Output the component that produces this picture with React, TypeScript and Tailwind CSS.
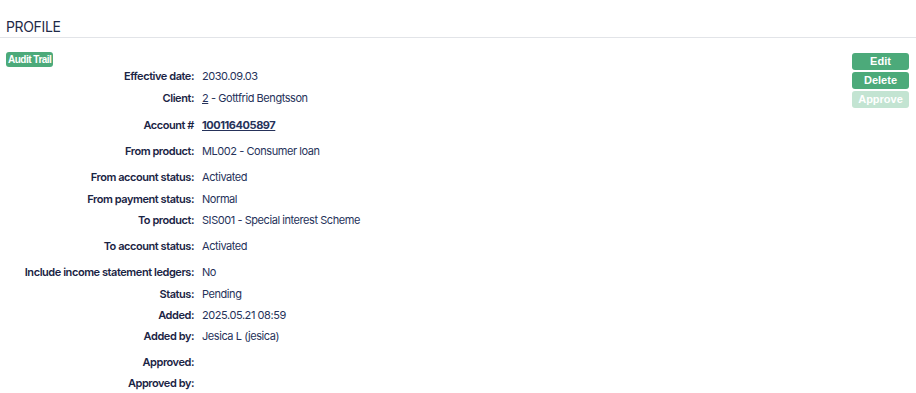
import type { ReactNode } from "react";

type Row = { label: string; value?: ReactNode; h: string };

const rows: Row[] = [
  { label: "Effective date:", value: "2030.09.03", h: "h-[22px]" },
  {
    label: "Client:",
    value: (
      <>
        <span className="underline">2</span> - Gottfrid Bengtsson
      </>
    ),
    h: "h-[27px]"
  },
  {
    label: "Account #",
    value: <span className="font-bold underline">100116405897</span>,
    h: "h-[26px]"
  },
  { label: "From product:", value: "ML002 - Consumer loan", h: "h-[26px]" },
  { label: "From account status:", value: "Activated", h: "h-[22px]" },
  { label: "From payment status:", value: "Normal", h: "h-[21px]" },
  { label: "To product:", value: "SIS001 - Special interest Scheme", h: "h-[26px]" },
  { label: "To account status:", value: "Activated", h: "h-[26px]" },
  { label: "Include income statement ledgers:", value: "No", h: "h-[22px]" },
  { label: "Status:", value: "Pending", h: "h-[21px]" },
  { label: "Added:", value: "2025.05.21 08:59", h: "h-[21px]" },
  { label: "Added by:", value: "Jesica L (jesica)", h: "h-[26px]" },
  { label: "Approved:", h: "h-[21px]" },
  { label: "Approved by:", h: "h-[21px]" }
];

export default function App() {
  return (
    <div className="h-[393px] w-[916px] overflow-hidden bg-white font-['Inter',sans-serif] text-[#1f2a48]">
      <div className="border-b border-[#e2e4e8] px-[6px] pb-[2px] pt-[19px]">
        <h1 className="text-[14px] leading-[16px] tracking-tight">PROFILE</h1>
      </div>

      <div className="flex px-[6px] pt-[14px]">
        <div className="flex-1">
          <div className="w-fit rounded-[3px] bg-[#4caa7a] px-[2px] font-['Liberation_Sans',sans-serif] text-[10px] font-bold leading-[15px] tracking-[-0.05em] text-white">
            Audit Trail
          </div>

          <div className="mt-[1px]">
            {rows.map((r) => (
              <div key={r.label} className={`flex ${r.h} text-[11px] leading-[14px] tracking-[-0.04em]`}>
                <div className="w-[188px] shrink-0 pt-[1px] text-right font-semibold text-[#1a2444]">
                  {r.label}
                </div>
                <div className="pl-[8px] pt-[1px] text-[#26325a]">{r.value}</div>
              </div>
            ))}
          </div>
        </div>

        <div className="mr-[1px] flex w-[57px] flex-col gap-[2px] pt-[1px]">
          <ActionButton label="Edit" />
          <ActionButton label="Delete" />
          <ActionButton label="Approve" disabled />
        </div>
      </div>
    </div>
  );
}

function ActionButton({ label, disabled }: { label: string; disabled?: boolean }) {
  return (
    <button
      type="button"
      disabled={disabled}
      className={`h-[17px] w-full rounded-[3px] font-['Liberation_Sans',sans-serif] text-[11px] font-bold leading-[17px] text-white ${
        disabled ? "bg-[#c3e4d2]" : "bg-[#4caa7a]"
      }`}
    >
      {label}
    </button>
  );
}
